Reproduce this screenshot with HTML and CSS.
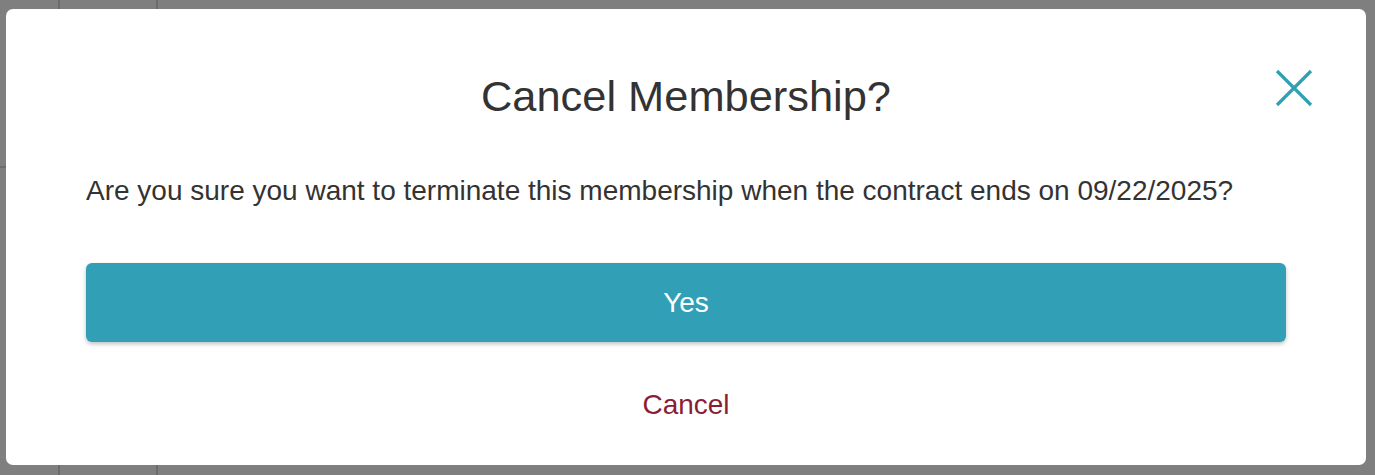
FILE: index.html
```html
<!DOCTYPE html>
<html>
<head>
<meta charset="utf-8">
<link rel="stylesheet" href="styles.css">
</head>
<body>
<div class="page">
  <div class="bg-col c1"><div class="bg-cell"></div></div>
  <div class="bg-col c2"></div>
  <div class="bg-col c3"></div>
</div>
<div class="overlay">
  <div class="modal">
    <div class="modal-head">
      <h2 class="title">Cancel Membership?</h2>
      <button class="close" aria-label="Close">
        <svg width="38" height="38" viewBox="0 0 38 38"><path d="M2 2 L36 36 M36 2 L2 36" stroke="#31a0b5" stroke-width="3.2" fill="none"/></svg>
      </button>
    </div>
    <p class="message">Are you sure you want to terminate this membership when the contract ends on 09/22/2025?</p>
    <button class="btn-yes">Yes</button>
    <button class="btn-cancel">Cancel</button>
  </div>
</div>
</body>
</html>
```
FILE: styles.css
```css
html, body {
  margin: 0;
  padding: 0;
  width: 1375px;
  height: 475px;
  overflow: hidden;
  background: #ffffff;
  font-family: Arial, "Liberation Sans", sans-serif;
}
.page {
  display: flex;
  height: 475px;
}
.bg-col {
  border-right: 2px solid #d9d9d9;
}
.c1 { width: 58px; }
.c2 { width: 96px; }
.c3 { flex: 1; border-right: none; }
.bg-cell {
  height: 166px;
  border-bottom: 2px solid #d9d9d9;
}
.overlay {
  position: absolute;
  inset: 0;
  background: rgba(0, 0, 0, 0.5);
  padding: 9px 9px 10px 6px;
  box-sizing: border-box;
}
.modal {
  background: #ffffff;
  border-radius: 7px;
  height: 456px;
  box-sizing: border-box;
  padding: 0 80px 0 80px;
  display: flex;
  flex-direction: column;
  align-items: stretch;
}
.modal-head {
  position: relative;
  height: 150px;
  display: flex;
  justify-content: center;
}
.title {
  margin: 62px 0 0 0;
  font-weight: normal;
  font-size: 43.4px;
  line-height: 50px;
  color: #333333;
  height: 50px;
}
.close {
  position: absolute;
  right: -27px;
  top: 60px;
  width: 38px;
  height: 38px;
  padding: 0;
  border: none;
  background: none;
}
.message {
  margin: 15px 0 0 0;
  font-size: 28px;
  line-height: 34px;
  color: #333333;
}
.btn-yes {
  margin-top: 55px;
  height: 79px;
  border: none;
  border-radius: 6px;
  background: #319fb5;
  color: #ffffff;
  font-family: inherit;
  font-size: 28px;
  box-shadow: 0 2px 4px rgba(0, 0, 0, 0.25);
  padding: 0;
}
.btn-cancel {
  align-self: center;
  margin-top: 46px;
  border: none;
  background: none;
  color: #8c1d32;
  font-family: inherit;
  font-size: 28px;
  line-height: 34px;
  padding: 0 4px;
}
```
